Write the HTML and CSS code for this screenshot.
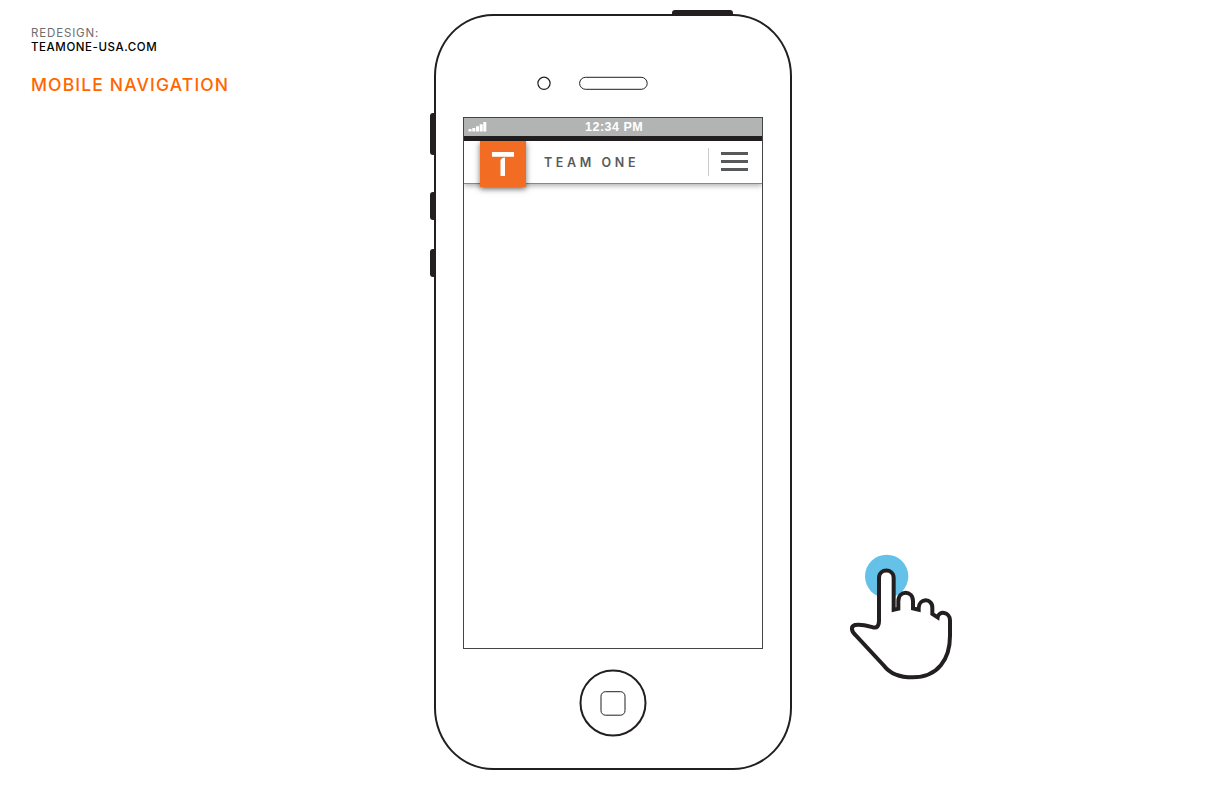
FILE: index.html
```html
<!DOCTYPE html>
<html lang="en">
<head>
<meta charset="utf-8">
<title>Mobile Navigation</title>
<link rel="stylesheet" href="styles.css">
</head>
<body>
<main class="board">
  <header class="intro">
    <p class="label">REDESIGN:</p>
    <p class="site">TEAMONE-USA.COM</p>
    <h1 class="title">MOBILE NAVIGATION</h1>
  </header>

  <section class="phone">
    <i class="key power"></i>
    <i class="key mute"></i>
    <i class="key vol-up"></i>
    <i class="key vol-down"></i>
    <div class="body">
      <svg class="ear" width="112" height="14" viewBox="0 0 112 14" fill="none" stroke="#231f20"><circle cx="7" cy="7.300" r="6.100" stroke-width="1.200"/><rect x="42.600" y="1.300" width="67.600" height="12" rx="6"/></svg>
      <div class="screen">
        <div class="status">
          <svg class="signal" width="19" height="10" viewBox="0 0 19 10" fill="#fff"><path d="M.5 7h3v2.500h-3zM4.300 6h3v3.500h-3zM8 4.200h3v5.300H8zM11.700 2.300h3v7.200h-3zM15.300 0h3v9.500h-3z"/></svg>
          <span class="time">12:34 PM</span>
        </div>
        <nav class="nav">
          <div class="logo"><svg width="22" height="24" viewBox="0 0 22 24" fill="#fff"><path d="M0 0h22v4.700H0zM8.500 8l2-2 2.500-.6V24H8.500z"/></svg></div>
          <span class="brand">TEAM ONE</span>
          <span class="divider"></span>
          <span class="menu"><i></i><i></i><i></i></span>
        </nav>
      </div>
      <svg class="home" width="68" height="68" viewBox="0 0 68 68" fill="none" stroke="#231f20"><circle cx="34" cy="34" r="32.500" stroke-width="2"/><rect x="22" y="22.700" width="24" height="23.500" rx="4.500"/></svg>
    </div>
  </section>

  <aside class="pointer">
    <svg width="125" height="145" viewBox="0 0 375 435">
      <circle cx="140" cy="94" r="65" fill="#64c2e9"/>
      <path d="M161 194V99C161 69 117 69 117 99V226Q117 252 99 247C81 242 63 236 45 240C32 244 33 257 46 270L132 362C151 387 180 397 218 397C294 397 330 342 330 272V226C330 200 296 196 293 217L277 207V190C279 158 236 158 236 190V194L219 190V169C219 135 175 135 175 169V191Z" fill="#fff" stroke="#231f20" stroke-width="12"/>
    </svg>
  </aside>
</main>
</body>
</html>
```
FILE: styles.css
```css
* { box-sizing: border-box; }
body { margin: 0; background: #fff; font-family: Inter, "Liberation Sans", sans-serif; }
.board { display: grid; grid-template-columns: 434px 358px 1fr; height: 792px; overflow: hidden; }

.intro { padding: 26px 0 0 31px; white-space: nowrap; }
.label, .site { margin: 0; font-size: 11.5px; line-height: 14px; }
.label { color: #6e6e6e; letter-spacing: .85px; }
.site { color: #000; font-weight: 500; letter-spacing: .58px; }
.title { margin: 21px 0 0; font-size: 17.5px; line-height: 20px; font-weight: 500; letter-spacing: 1.15px; color: #ff6600; }

.phone { position: relative; margin-top: 14px; height: 756px; }
.body { position: relative; height: 756px; border: 2px solid #231f20; border-radius: 59px / 62px; background: #fff; padding: 60px 27px 0; }
.key { position: absolute; background: #231f20; }
.power { left: 238px; top: -4px; width: 61px; height: 6px; border-radius: 3px 3px 0 0; }
.mute, .vol-up, .vol-down { left: -4px; width: 6px; border-radius: 3px 0 0 3px; }
.mute { top: 99px; height: 42px; }
.vol-up { top: 178px; height: 28px; }
.vol-down { top: 235px; height: 28px; }

.ear { display: block; margin-left: 74px; }

.screen { height: 532px; margin-top: 27px; border: 1px solid #444; overflow: hidden; }
.status { display: flex; height: 23px; padding: 4px 0 0 4px; background: #b1b4b3; border-bottom: 5px solid #231f20; }
.signal { margin-top: 0; }
.time { width: 60px; margin-left: 98px; font: bold 12.500px/11px "Liberation Sans", sans-serif; letter-spacing: .5px; color: #fff; white-space: nowrap; }
.nav { display: flex; height: 43px; background: #fff; border-bottom: 1px solid #888; box-shadow: 0 2px 5px rgba(0,0,0,.3); }
.logo { flex: none; width: 46px; height: 46px; margin-left: 16px; padding: 11px 0 0 12px; background: #f36c24; box-shadow: 0 2px 6px rgba(0,0,0,.55); line-height: 0; }
.brand { flex: none; width: 164px; margin-left: 18px; font-size: 12.500px; line-height: 43px; font-weight: 600; letter-spacing: 3.600px; color: #595a5a; white-space: nowrap; }
.divider { width: 1px; height: 28px; margin-top: 7px; background: #ccc; }
.menu { display: flex; flex-direction: column; gap: 5px; width: 27px; margin: 11px 0 0 12px; }
.menu i { height: 3px; background: #58595a; }

.home { display: block; margin: 20px 0 0 116px; }

.pointer { padding: 545px 0 0 48px; line-height: 0; }
```
